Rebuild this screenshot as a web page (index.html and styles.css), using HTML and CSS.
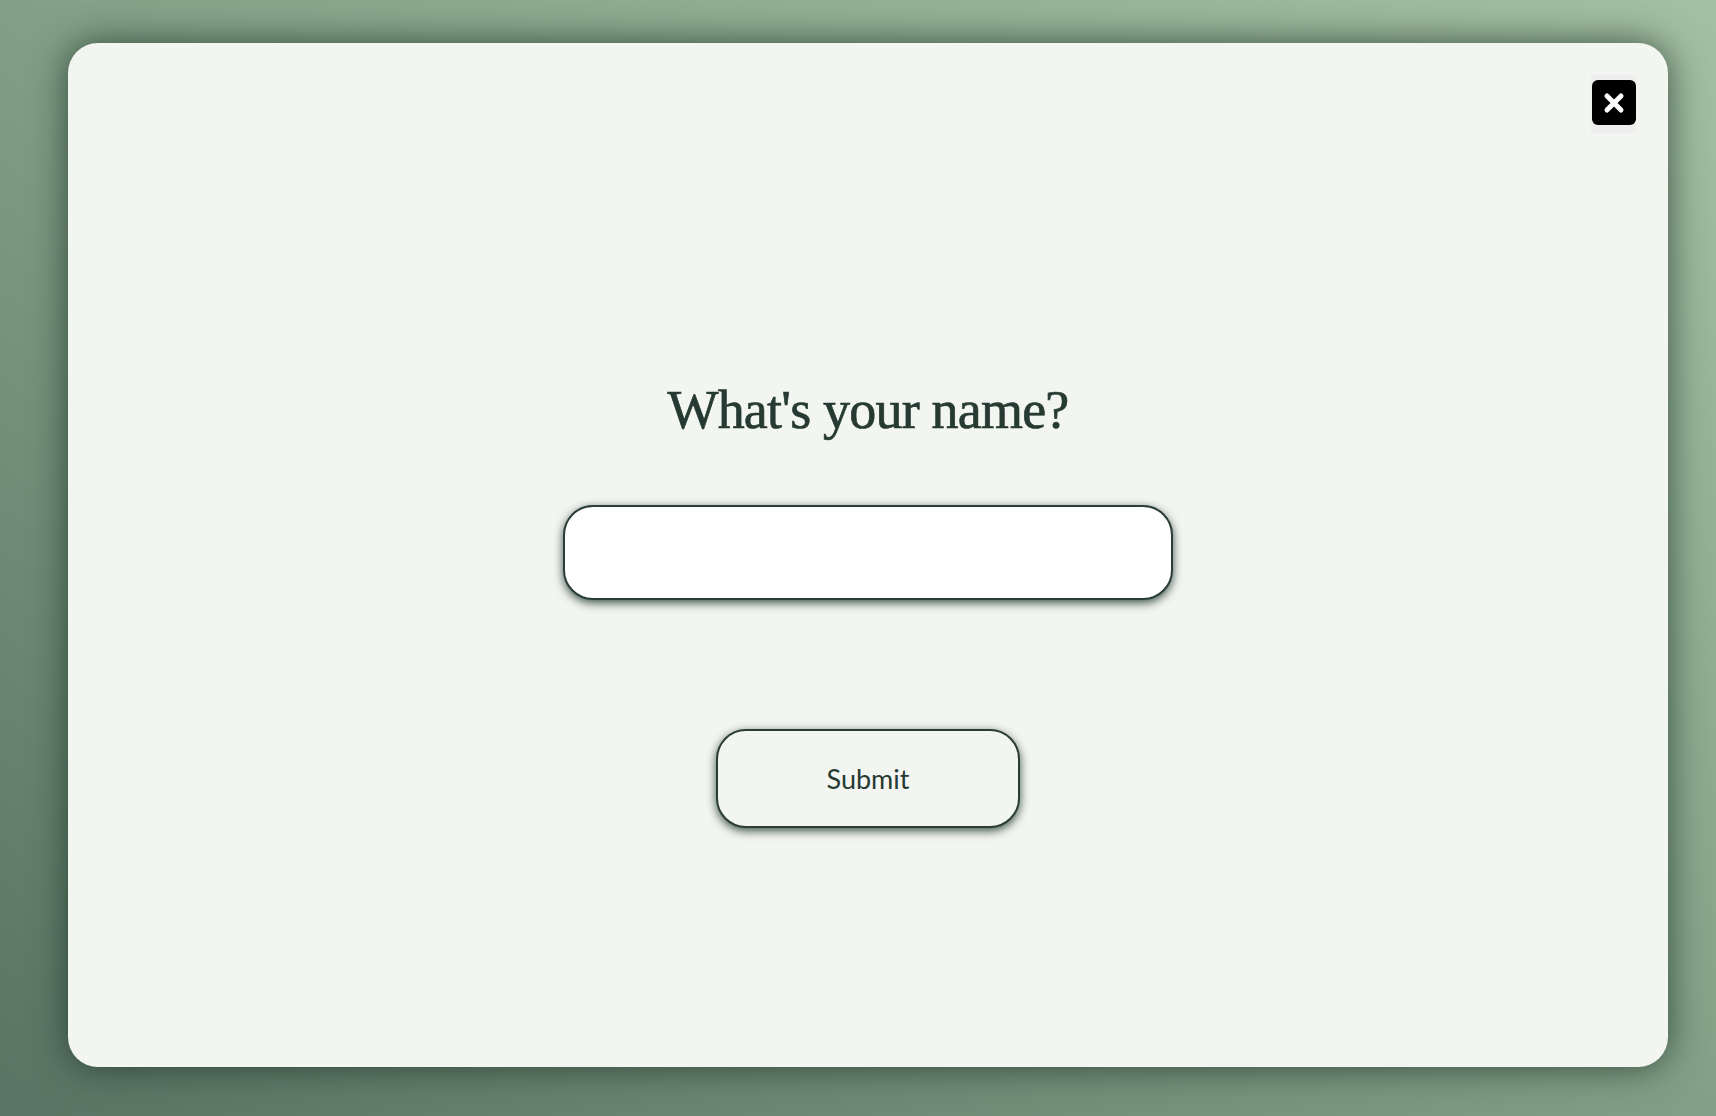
FILE: index.html
```html
<!DOCTYPE html>
<html lang="en">
<head>
<meta charset="utf-8">
<title>What's your name?</title>
<link rel="stylesheet" href="styles.css">
</head>
<body>
<div class="modal">
  <button class="close" aria-label="Close">
    <svg width="44" height="45" viewBox="0 0 44 45">
      <rect x="0" y="0" width="44" height="45" rx="6" fill="#000"/>
      <path d="M15 16 L29 30 M29 16 L15 30" stroke="#fff" stroke-width="5" stroke-linecap="round"/>
    </svg>
  </button>
  <h1 class="title">What's your name?</h1>
  <input class="name-input" type="text" aria-label="Name">
  <button class="submit">Submit</button>
</div>
</body>
</html>
```
FILE: styles.css
```css
html, body {
  margin: 0;
  height: 100%;
}
body {
  box-sizing: border-box;
  padding: 43px 48px 49px 68px;
  background: linear-gradient(to bottom left, #a4c0a4 0%, #86a48a 45%, #587462 100%);
  font-family: "Lato", "Liberation Sans", sans-serif;
  overflow: hidden;
}
.modal {
  position: relative;
  box-sizing: border-box;
  height: 100%;
  background: #f3f5f1;
  border-radius: 30px;
  box-shadow: 0 0 36px rgba(25, 45, 35, 0.75);
  display: flex;
  flex-direction: column;
  align-items: center;
  padding-top: 334px;
}
.close {
  position: absolute;
  top: 32px;
  right: 32px;
  width: 45px;
  height: 58px;
  padding: 5px 0 8px 1px;
  border: none;
  background: #efefef;
  display: flex;
  align-items: flex-start;
  justify-content: center;
}
.close svg { display: block; }
.title {
  margin: 0;
  font-family: "Liberation Serif", "DejaVu Serif", serif;
  font-weight: normal;
  font-size: 54px;
  line-height: 67px;
  color: #263a33;
  letter-spacing: -0.8px;
  -webkit-text-stroke: 0.7px #263a33;
}
.name-input {
  margin-top: 61px;
  box-sizing: border-box;
  width: 610px;
  height: 95px;
  border: 2px solid #2a3d36;
  border-radius: 30px;
  background: #fff;
  box-shadow: 0 3px 10px rgba(30, 55, 45, 0.85);
  outline: none;
}
.submit {
  margin-top: 129px;
  box-sizing: border-box;
  width: 304px;
  height: 99px;
  border: 2px solid #2a3d36;
  border-radius: 30px;
  background: #f3f5f1;
  box-shadow: 0 3px 10px rgba(30, 55, 45, 0.85);
  font-family: "Lato", "Liberation Sans", sans-serif;
  font-size: 27px;
  color: #263a33;
}
```
